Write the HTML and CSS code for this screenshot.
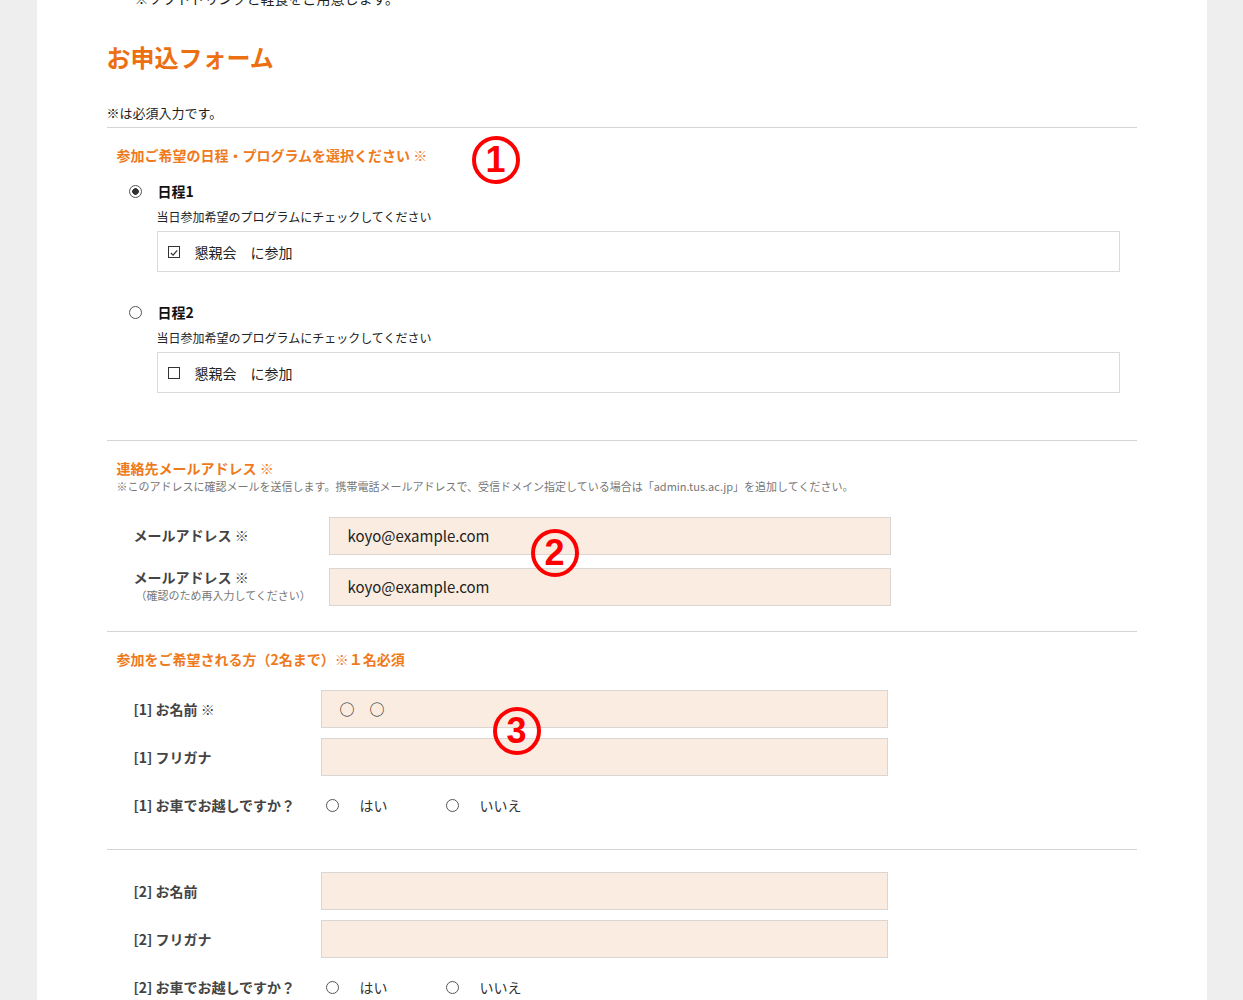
FILE: index.html
```html
<!DOCTYPE html>
<html lang="ja">

<head>
  <meta charset="UTF-8">
  <meta name="viewport" content="width=device-width, initial-scale=1.0">
  <title>お申込フォーム</title>
  <link rel="stylesheet" href="styles.css">
</head>

<body>
  <div class="page">

    <p class="intro">※ソフトドリンクと軽食をご用意します。</p>

    <h2 class="form-title">お申込フォーム</h2>

    <p class="req-note">※は必須入力です。</p>

    <!-- 日程 -->
    <section class="block">
      <h3 class="block-title">参加ご希望の日程・プログラムを選択ください ※</h3>

      <div class="course">
        <label class="course-head">
          <span class="radio checked"></span>
          <span class="course-name">日程1</span>
        </label>
        <p class="course-sub">当日参加希望のプログラムにチェックしてください</p>
        <div class="program-box">
          <span class="check">
            <svg width="12" height="12" viewBox="0 0 12 12"><path d="M2.3 6 L4.9 8.7 L9.8 2.9" fill="none" stroke="#333" stroke-width="1.4"/></svg>
          </span>
          <span>懇親会　に参加</span>
        </div>
      </div>

      <div class="course course-2">
        <label class="course-head">
          <span class="radio"></span>
          <span class="course-name">日程2</span>
        </label>
        <p class="course-sub">当日参加希望のプログラムにチェックしてください</p>
        <div class="program-box">
          <span class="check"></span>
          <span>懇親会　に参加</span>
        </div>
      </div>
    </section>

    <!-- メール -->
    <section class="block block-mail">
      <h3 class="block-title">連絡先メールアドレス ※</h3>
      <p class="block-desc">※このアドレスに確認メールを送信します。携帯電話メールアドレスで、受信ドメイン指定している場合は「admin.tus.ac.jp」を追加してください。</p>

      <div class="row mail-row first">
        <div class="row-label">メールアドレス ※</div>
        <div class="field">koyo@example.com</div>
      </div>
      <div class="row mail-row">
        <div class="row-label">メールアドレス ※<small>（確認のため再入力してください）</small></div>
        <div class="field">koyo@example.com</div>
      </div>
    </section>

    <!-- 参加者 -->
    <section class="block block-person">
      <h3 class="block-title">参加をご希望される方（2名まで）※１名必須</h3>

      <div class="person">
        <div class="row">
          <div class="row-label">[1] お名前 ※</div>
          <div class="field">○　○</div>
        </div>
        <div class="row">
          <div class="row-label">[1] フリガナ</div>
          <div class="field"></div>
        </div>
        <div class="row">
          <div class="row-label">[1] お車でお越しですか？</div>
          <div class="choices">
            <label class="choice"><span class="radio"></span>はい</label>
            <label class="choice"><span class="radio"></span>いいえ</label>
          </div>
        </div>
      </div>
    </section>

    <section class="block block-person2">
      <div class="person">
        <div class="row">
          <div class="row-label">[2] お名前</div>
          <div class="field"></div>
        </div>
        <div class="row">
          <div class="row-label">[2] フリガナ</div>
          <div class="field"></div>
        </div>
        <div class="row">
          <div class="row-label">[2] お車でお越しですか？</div>
          <div class="choices">
            <label class="choice"><span class="radio"></span>はい</label>
            <label class="choice"><span class="radio"></span>いいえ</label>
          </div>
        </div>
      </div>
    </section>

    <!-- 注記の番号 -->
    <span class="mark mark-1">1</span>
    <span class="mark mark-2">2</span>
    <span class="mark mark-3">3</span>
  </div>
</body>

</html>
```

FILE: styles.css
```css
* {
  margin: 0;
  padding: 0;
  box-sizing: border-box;
}

body {
  background: #eeeeee;
  font-family: "Noto Sans CJK JP", "Noto Sans", sans-serif;
  color: #222;
}

.page {
  position: relative;
  display: flow-root;
  width: 1170px;
  height: 1000px;
  margin: 0 auto;
  padding: 0 70px;
  background: #fff;
  overflow: hidden;
}

.intro {
  margin-top: -12px;
  margin-left: 28px;
  font-size: 14px;
  line-height: 20px;
}

.form-title {
  margin-top: 33px;
  font-size: 24px;
  line-height: 32px;
  color: #ec7012;
}

.req-note {
  margin-top: 30px;
  font-size: 13px;
  line-height: 20px;
}

.block {
  margin-top: 4px;
  border-top: 1px solid #d4d4d4;
  padding-top: 17px;
}

.block-title {
  padding-left: 10px;
  font-size: 14px;
  line-height: 20px;
  color: #ee7a1c;
}

/* 日程 */
.course {
  margin-top: 16px;
  padding-left: 22px;
}

.course-2 {
  margin-top: 30px;
}

.course-head {
  display: flex;
  align-items: center;
  height: 20px;
}

.course-name {
  margin-left: 16px;
  font-size: 14px;
  font-weight: bold;
  color: #111;
}

.course-sub {
  margin-left: 28px;
  margin-top: 6px;
  font-size: 12px;
  line-height: 20px;
}

.program-box {
  display: flex;
  align-items: center;
  gap: 15px;
  margin-left: 28px;
  margin-top: 4px;
  width: 963px;
  height: 41px;
  padding-left: 10px;
  border: 1px solid #dadada;
  font-size: 14px;
}

.check {
  display: flex;
  width: 12px;
  height: 12px;
  border: 1px solid #333;
  background: #fff;
}

.radio {
  display: inline-block;
  flex: none;
  width: 13px;
  height: 13px;
  border: 1px solid #555;
  border-radius: 50%;
  background: #fff;
}

.radio.checked {
  background: radial-gradient(circle, #333 0 3px, #fff 3.6px);
}

/* メール */
.block-mail {
  margin-top: 47px;
}

.block-desc {
  margin-top: 1px;
  padding-left: 10px;
  font-size: 11px;
  line-height: 14px;
  color: #777;
}

.row {
  display: grid;
  grid-template-columns: 214px 567px;
  align-items: center;
  min-height: 38px;
  margin-top: 10px;
}

.row-label {
  padding-left: 27px;
  font-size: 14px;
  font-weight: bold;
  line-height: 18px;
  color: #444;
}

.row-label small {
  display: block;
  padding-left: 2px;
  font-size: 11px;
  font-weight: normal;
  color: #777;
}

.field {
  height: 38px;
  padding-left: 18px;
  background: #faece0;
  border: 1px solid #dcd6d2;
  font-size: 15px;
  line-height: 36px;
  color: #222;
}

.mail-row {
  grid-template-columns: 222px 562px;
  margin-top: 13px;
}

.mail-row .row-label {
  margin-top: -3px;
}

.mail-row.first {
  margin-top: 24px;
}

.block-person {
  margin-top: 25px;
}

.block-person .person {
  margin-top: 21px;
}

.block-person2 {
  margin-top: 25px;
  padding-top: 12px;
}

.choices {
  display: flex;
  padding-left: 5px;
}

.choice {
  display: flex;
  align-items: center;
  gap: 21px;
  width: 120px;
  font-size: 14px;
  color: #333;
}

/* 注記の番号 */
.mark {
  position: absolute;
  width: 48px;
  height: 48px;
  border: 4px solid #ff0000;
  border-radius: 50%;
  font-family: "Liberation Sans", sans-serif;
  font-size: 36px;
  font-weight: bold;
  line-height: 40px;
  text-align: center;
  color: #ff0000;
}

.mark-1 {
  left: 435px;
  top: 136px;
}

.mark-2 {
  left: 494px;
  top: 529px;
}

.mark-3 {
  left: 456px;
  top: 707px;
}
```
